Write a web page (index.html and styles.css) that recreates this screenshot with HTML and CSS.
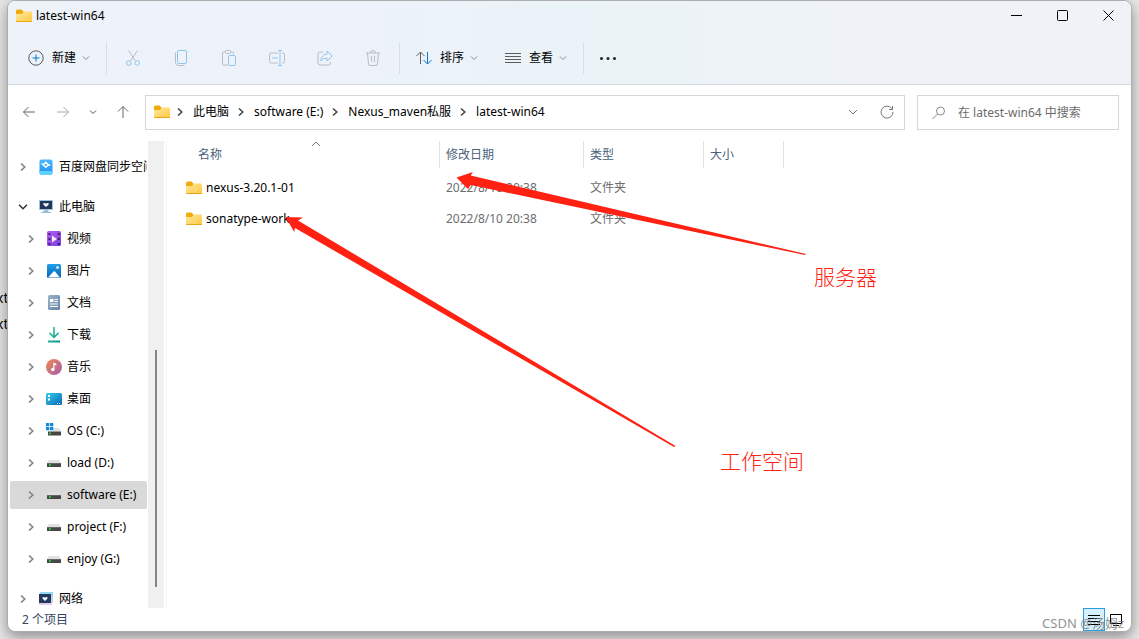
FILE: index.html
```html
<!DOCTYPE html>
<html lang="zh-CN">
<head>
<meta charset="utf-8">
<title>latest-win64</title>
<link rel="stylesheet" href="styles.css">
</head>
<body>
<svg class="defs" aria-hidden="true">
  <defs>
    <linearGradient id="gFolder" x1="0" y1="0" x2="1" y2="1"><stop offset="0" stop-color="#ffe8a0"/><stop offset="1" stop-color="#ffc93f"/></linearGradient>
    <linearGradient id="gBaidu" x1="0" y1="0" x2="0" y2="1"><stop offset="0" stop-color="#4cb8ff"/><stop offset="1" stop-color="#1e90f5"/></linearGradient>
    <linearGradient id="gVideo" x1="0" y1="0" x2="1" y2="1"><stop offset="0" stop-color="#b35cf0"/><stop offset="1" stop-color="#7c3fe0"/></linearGradient>
    <linearGradient id="gPic" x1="0" y1="0" x2="0" y2="1"><stop offset="0" stop-color="#1fa0ea"/><stop offset="1" stop-color="#0b63b8"/></linearGradient>
    <linearGradient id="gDoc" x1="0" y1="0" x2="1" y2="1"><stop offset="0" stop-color="#9db4ca"/><stop offset="1" stop-color="#6283a8"/></linearGradient>
    <linearGradient id="gDown" x1="0" y1="0" x2="1" y2="1"><stop offset="0" stop-color="#2ecb93"/><stop offset="1" stop-color="#0a948c"/></linearGradient>
    <linearGradient id="gMusic" x1="0" y1="0" x2="1" y2="1"><stop offset="0" stop-color="#f08a4b"/><stop offset="1" stop-color="#a85bb0"/></linearGradient>
    <linearGradient id="gDesk" x1="0" y1="0" x2="1" y2="1"><stop offset="0" stop-color="#35cde8"/><stop offset="1" stop-color="#0a68b8"/></linearGradient>
    <linearGradient id="gNet" x1="0" y1="0" x2="0" y2="1"><stop offset="0" stop-color="#86d9ee"/><stop offset="1" stop-color="#e9cdf2"/></linearGradient>
    <symbol id="folder" viewBox="0 0 16 14"><path d="M0 2a1.500 1.500 0 0 1 1.500-1.500h4L7.500 2.500V6H0z" fill="#f0ab0c"/><path d="M0 5h6l2-2.500h7a1 1 0 0 1 1 1V12a1 1 0 0 1-1 1H1a1 1 0 0 1-1-1z" fill="url(#gFolder)"/><path d="M0 12h16a1 1 0 0 1-1 1H1a1 1 0 0 1-1-1z" fill="#eaa514"/></symbol>
    <symbol id="right" viewBox="0 0 6 8"><path d="M1 .5 4.800 4 1 7.500" fill="none" stroke="currentColor" stroke-width="1.500"/></symbol>
    <symbol id="down" viewBox="0 0 8 6"><path d="M1 1.500 4 4.500 7 1.500" fill="none" stroke="currentColor"/></symbol>
    <symbol id="drive" viewBox="0 0 16 16"><path d="M3 5h10l2 3H1z" fill="#dfe1e3"/><path d="M1 8h14v4H1z" fill="#454747"/><path d="M1 8h14v1H1z" fill="#666"/><circle cx="4" cy="10" r="1" fill="#35e04b"/></symbol>
  </defs>
</svg>
<div class="backdrop" aria-hidden="true"><span>xt</span><span>xt</span></div>
<div class="window">
  <header class="chrome">
    <div class="titlebar">
      <svg class="folder"><use href="#folder"/></svg>
      <h1 class="title">latest-win64</h1>
      <button class="caption" aria-label="最小化"><svg viewBox="0 0 11 11"><path d="M0 5.500H11"/></svg></button>
      <button class="caption" aria-label="最大化"><svg viewBox="0 0 11 11"><rect x=".5" y=".5" width="10" height="10" rx="1"/></svg></button>
      <button class="caption" aria-label="关闭"><svg viewBox="0 0 11 11"><path d="M.5.500l10 10M10.500.500l-10 10"/></svg></button>
    </div>
    <div class="toolbar">
      <button class="command"><svg class="icon" viewBox="0 0 16 16"><circle cx="8" cy="8" r="7.200" class="ink"/><path d="M8 4.500v7M4.500 8h7" class="blue"/></svg>新建<svg class="down"><use href="#down"/></svg></button>
      <span class="rule"></span>
      <div class="tools">
        <button aria-label="剪切" disabled><svg class="icon" viewBox="0 0 16 16"><path d="M3.500.500 10.500 11M12.500.500 5.500 11" class="ink"/><circle cx="3.800" cy="13" r="2.300" class="blue"/><circle cx="12.200" cy="13" r="2.300" class="blue"/></svg></button>
        <button aria-label="复制" disabled><svg class="icon" viewBox="0 0 16 16"><path d="M2.500 2.500v10a3 3 0 0 0 3 3h6" class="ink"/><rect x="4.500" y=".5" width="9" height="13" rx="1.500" class="blue"/></svg></button>
        <button aria-label="粘贴" disabled><svg class="icon" viewBox="0 0 16 16"><path d="M4.500 2h-2a1 1 0 0 0-1 1v11a1 1 0 0 0 1 1H7M9.500 2h2a1 1 0 0 1 1 1v1.500" class="ink"/><rect x="4.500" y=".5" width="5" height="3" rx="1" class="ink"/><rect x="7.500" y="5.500" width="7" height="10" rx="1" class="blue"/></svg></button>
        <button aria-label="重命名" disabled><svg class="icon" viewBox="0 0 16 16"><path d="M9 3H2a1.500 1.500 0 0 0-1.500 1.500v7A1.500 1.500 0 0 0 2 13h7M13 3h1a1.500 1.500 0 0 1 1.500 1.500v7A1.500 1.500 0 0 1 14 13h-1" class="ink"/><path d="M9 .5h4M9 15.500h4M11 .5v15M3 8h6" class="blue"/></svg></button>
        <button aria-label="共享" disabled><svg class="icon" viewBox="0 0 16 16"><path d="M6 2H3a2 2 0 0 0-2 2v9a2 2 0 0 0 2 2h8.500a2 2 0 0 0 2-2v-1" class="ink"/><path d="M10 1l5.300 5-5.300 5V8.300C7 8 5 9 3.700 11 4 7 6.500 4.200 10 4z" class="blue"/></svg></button>
        <button aria-label="删除" disabled><svg class="icon" viewBox="0 0 16 16"><path d="M1 3h14M5.500 3a2.500 2.500 0 0 1 5 0M2.500 3l1 11a1.500 1.500 0 0 0 1.500 1.500h6a1.500 1.500 0 0 0 1.500-1.500l1-11M6.500 6v6M9.500 6v6" class="ink"/></svg></button>
      </div>
      <span class="rule"></span>
      <button class="command"><svg class="icon" viewBox="0 0 16 16"><path d="M4.500 14V2.500M.5 6l4-4 4 4" class="ink"/><path d="M11.500 2v11.500M7.500 10l4 4 4-4" class="blue"/></svg>排序<svg class="down"><use href="#down"/></svg></button>
      <button class="command"><svg class="icon" viewBox="0 0 16 16"><path d="M0 3.500h16M0 6.500h16M0 9.500h16M0 12.500h16" class="ink"/></svg>查看<svg class="down"><use href="#down"/></svg></button>
      <span class="rule"></span>
      <button class="command" aria-label="更多"><svg class="icon" viewBox="0 0 16 16"><g fill="#222"><circle cx="1.500" cy="8.500" r="1.500"/><circle cx="8" cy="8.500" r="1.500"/><circle cx="14.500" cy="8.500" r="1.500"/></g></svg></button>
    </div>
  </header>
  <div class="location">
    <div class="history">
      <button aria-label="后退"><svg class="icon" viewBox="0 0 16 16"><path d="M14 8H2.500M7.500 3l-5 5 5 5"/></svg></button>
      <button aria-label="前进" class="faint"><svg class="icon" viewBox="0 0 16 16"><path d="M2 8h11.500M8.500 3l5 5-5 5"/></svg></button>
      <button aria-label="最近" class="recent"><svg class="down"><use href="#down"/></svg></button>
      <button aria-label="向上"><svg class="icon" viewBox="0 0 16 16"><path d="M8 14V2.500M3 7.500l5-5 5 5"/></svg></button>
    </div>
    <nav class="address" aria-label="地址">
      <svg class="folder"><use href="#folder"/></svg>
      <ol class="crumbs">
        <li><svg class="right"><use href="#right"/></svg><a href="#">此电脑</a></li>
        <li><svg class="right"><use href="#right"/></svg><a href="#">software (E:)</a></li>
        <li><svg class="right"><use href="#right"/></svg><a href="#">Nexus_maven私服</a></li>
        <li><svg class="right"><use href="#right"/></svg><a href="#">latest-win64</a></li>
      </ol>
      <button aria-label="展开"><svg class="icon" viewBox="0 0 16 16"><path d="M4 6l4 4 4-4"/></svg></button>
      <button aria-label="刷新"><svg class="icon" viewBox="0 0 16 16"><path d="M12.800 4.500A6 6 0 1 0 14 8M13.500 2v3.500H10"/></svg></button>
    </nav>
    <label class="search"><svg class="icon" viewBox="0 0 16 16"><circle cx="9.500" cy="6" r="4"/><path d="M6.500 9l-5 5"/></svg><input type="text" aria-label="搜索" placeholder="在 latest-win64 中搜索"></label>
  </div>
  <div class="body">
    <nav class="tree" aria-label="导航窗格">
      <a href="#" class="node root"><svg class="right"><use href="#right"/></svg><svg class="icon" viewBox="0 0 16 16"><rect x="1.500" y=".5" width="13" height="15" rx="2" fill="url(#gBaidu)"/><path d="M1.500 12h13v2a2 2 0 0 1-2 2h-9a2 2 0 0 1-2-2z" fill="#5fd0ff"/><path d="M7.800 3.200 10.300 5.700 7.800 8.200 5.300 5.700z" stroke="#fff" stroke-width="1.500"/><path d="M3.500 4.500 5.300 5.700M10.300 5.700 12 6.500" stroke="#fff" stroke-width="1.500"/></svg>百度网盘同步空间</a>
      <a href="#" class="node root"><svg class="open" viewBox="0 0 10 6"><path d="M1 .7 5 4.700 9 .7"/></svg><svg class="icon" viewBox="0 0 16 16"><path d="M1 1h14v10H1z" fill="#9cc4e4"/><path d="M2 2h12v8H2z" fill="#243656"/><path d="M8 8 5.200 5.500C5 3.800 7 3.600 8 4.800c1-1.200 3-1 2.800.7z" fill="#eaf7ff"/><path d="M6 11h4l1 2H5z" fill="#a9bccb"/><path d="M3 13h10v1H3z" fill="#91c3df"/></svg>此电脑</a>
      <a href="#" class="node"><svg class="right"><use href="#right"/></svg><svg class="icon" viewBox="0 0 16 16"><rect x="1" y="0" width="14" height="15" rx="1.500" fill="url(#gVideo)"/><path d="M6 4.500v7L11 8z" fill="#f5eaff"/><path d="M3.500 2v12M12.800 2v12" stroke="#38206b" stroke-width="2" stroke-dasharray="2 3"/></svg>视频</a>
      <a href="#" class="node"><svg class="right"><use href="#right"/></svg><svg class="icon" viewBox="0 0 16 16"><rect x="1" y="1" width="14" height="14" rx="1.500" fill="url(#gPic)"/><path d="M2 14.500 7.500 8.500q.8-.6 1.500 0l5 6z" fill="#fff"/><circle cx="11.500" cy="4.500" r="1.300" fill="#fff"/></svg>图片</a>
      <a href="#" class="node"><svg class="right"><use href="#right"/></svg><svg class="icon" viewBox="0 0 16 16"><rect x="2" y="0" width="12" height="15" rx="1.500" fill="url(#gDoc)"/><path d="M4 4h3.500v3H4zM8.500 4H12v1H8.500zM8.500 6H12v1H8.500zM4 8.500h8v1H4zM4 11h8v1H4z" fill="#fff"/></svg>文档</a>
      <a href="#" class="node"><svg class="right"><use href="#right"/></svg><svg class="icon" viewBox="0 0 16 16"><path d="M7.200 0h1.600v8.500l3.300-3.300 1.100 1.100L8 11.500 2.800 6.300l1.100-1.100 3.300 3.300zM2 13.500h12v2H2z" fill="url(#gDown)"/></svg>下载</a>
      <a href="#" class="node"><svg class="right"><use href="#right"/></svg><svg class="icon" viewBox="0 0 16 16"><circle cx="8" cy="8" r="8" fill="url(#gMusic)"/><circle cx="6.800" cy="10.500" r="1.700" fill="#fff"/><path d="M7.300 10.500V3.500l3 1.200v1.800l-1.800-.7v4.700z" fill="#fff"/></svg>音乐</a>
      <a href="#" class="node"><svg class="right"><use href="#right"/></svg><svg class="icon" viewBox="0 0 16 16"><rect y="2" width="16" height="12" rx="1.500" fill="url(#gDesk)"/><path d="M2 4h2v2H2zM2 7.500h2v2H2z" fill="#fff"/><path d="M11 12.500h1M13 12.500h1" stroke="#fff"/></svg>桌面</a>
      <a href="#" class="node"><svg class="right"><use href="#right"/></svg><svg class="icon" viewBox="0 0 16 16"><path d="M7 5h6l2 3.500H7z" fill="#dfe1e3"/><path d="M2 8.500h13v4H2z" fill="#454747"/><circle cx="4" cy="10.500" r="1" fill="#35e04b"/><path d="M0 0h3.300v3.300H0zM4 0h3.300v3.300H4zM0 4h3.300v3.300H0zM4 4h3.300v3.300H4z" fill="#1688dd"/></svg>OS (C:)</a>
      <a href="#" class="node"><svg class="right"><use href="#right"/></svg><svg class="icon"><use href="#drive"/></svg>load (D:)</a>
      <a href="#" class="node selected"><svg class="right"><use href="#right"/></svg><svg class="icon"><use href="#drive"/></svg>software (E:)</a>
      <a href="#" class="node"><svg class="right"><use href="#right"/></svg><svg class="icon"><use href="#drive"/></svg>project (F:)</a>
      <a href="#" class="node"><svg class="right"><use href="#right"/></svg><svg class="icon"><use href="#drive"/></svg>enjoy (G:)</a>
      <a href="#" class="node root"><svg class="right"><use href="#right"/></svg><svg class="icon" viewBox="0 0 16 16"><path d="M2 1h13v11H2zM1 4h13v10H1z" fill="url(#gNet)"/><path d="M1 3h12v9H1z" fill="#27395b"/><path d="M7 10 4.500 7.500C4.300 6 6 5.600 7 6.800c1-1.200 2.700-.8 2.500.7z" fill="#eaf7ff"/></svg>网络</a>
    </nav>
    <div class="scrollbar"><div class="thumb"></div></div>
    <main class="files">
      <table>
        <thead><tr><th class="name">名称<svg class="sorted" viewBox="0 0 10 6"><path d="M1 5l4-4 4 4"/></svg></th><th class="date">修改日期</th><th class="kind">类型</th><th class="size">大小</th></tr></thead>
        <tbody>
          <tr><td class="name"><span class="entry"><svg class="folder"><use href="#folder"/></svg>nexus-3.20.1-01</span></td><td>2022/8/10 20:38</td><td>文件夹</td><td></td></tr>
          <tr><td class="name"><span class="entry"><svg class="folder"><use href="#folder"/></svg>sonatype-work</span></td><td>2022/8/10 20:38</td><td>文件夹</td><td></td></tr>
        </tbody>
      </table>
    </main>
  </div>
  <footer class="status">
    <span class="count">2 个项目</span>
    <button class="view active" aria-label="详细信息"><svg viewBox="0 0 12 12"><path d="M0 1.500h12M0 4.500h12M0 7.500h12M0 10.500h12"/></svg></button>
    <button class="view" aria-label="大图标"><svg viewBox="0 0 12 12"><path d="M.5.500h11v9H.5zM3 11.500h6"/></svg></button>
    <span class="watermark">CSDN @汤姆z</span>
  </footer>
  <svg class="arrows" viewBox="0 0 900 460" aria-hidden="true"><path d="M456.500 177.500 473 172 470.700 175.500 806 254 805 255 470.700 185 468 189z"/><path d="M285.500 217 303 217.500 298 220.500 675.500 446 674 447 295 228 294.300 232z"/></svg>
  <span class="note server">服务器</span>
  <span class="note workspace">工作空间</span>
</div>
</body>
</html>
```
FILE: styles.css
```css
* { box-sizing: border-box; }
body {
  margin: 0;
  height: 100vh;
  padding: 0 7px 7px;
  overflow: hidden;
  background: #e6e6e6;
  font: 12px/16px "Noto Sans", "Noto Sans CJK SC", sans-serif;
  color: #000;
}
button { border: 0; padding: 0; background: none; font: inherit; color: inherit; display: flex; align-items: center; justify-content: center; }
a { color: inherit; text-decoration: none; }
svg { flex: none; display: block; }
.defs { position: absolute; width: 0; height: 0; }
.icon { width: 16px; height: 16px; fill: none; }
.folder { width: 16px; height: 14px; }
.right { width: 6px; height: 8px; }
.down { width: 8px; height: 6px; color: #888; }

.backdrop { position: absolute; left: -4px; top: 290px; display: flex; flex-direction: column; gap: 10px; font-size: 14px; }
.window {
  position: relative;
  height: 100%;
  display: flex;
  flex-direction: column;
  background: #fff;
  border: 1px solid #adadad;
  border-radius: 8px;
  box-shadow: 0 5px 14px rgba(0, 0, 0, 0.38);
  overflow: hidden;
}

.chrome { background: linear-gradient(90deg, #eef3fa 0, #edf2fb 30%, #eaf3f7 50%, #eff3f8 75%, #eff3f7 100%); border-bottom: 1px solid #d5dde3; }
.titlebar { display: flex; height: 29px; padding-left: 8px; align-items: center; }
.title { flex: 1; margin: 0 0 0 4px; font-size: 12px; font-weight: 400; }
.caption { width: 46px; height: 28px; }
.caption svg { width: 11px; height: 11px; fill: none; stroke: #000; }

.toolbar { display: flex; align-items: center; height: 54px; padding: 2px 0 0 20px; }
.command { gap: 8px; }
.command .down { margin-left: -2px; }
.command + .command { margin-left: 27px; }
.rule { width: 1px; height: 32px; margin: 0 16px; background: #d9dfe5; }
.tools { display: flex; margin: 0 -14px; }
.tools button { width: 48px; height: 32px; }
.toolbar .ink { stroke: #5c5c5c; fill: none; }
.toolbar .blue { stroke: #0078d0; fill: none; }
.tools .ink { stroke: #b9bdc1; }
.tools .blue { stroke: #90c5ea; }

.location { display: flex; padding: 10px 12px 11px 0; gap: 12px; }
.history { display: flex; align-items: center; padding: 0 0 2px 13px; width: 125px; gap: 18px; }
.history svg { stroke: #666; }
.history .down { stroke: none; color: #555; }
.history .faint svg { stroke: #aaa; }
.history .recent { width: 8px; }
.address, .search { display: flex; align-items: center; height: 35px; border: 1px solid #d6d6d6; background: #fff; }
.address { flex: 1; padding: 0 9px 1px 8px; gap: 7px; }
.crumbs { flex: 1; display: flex; margin: 0; padding: 0; gap: 9px; list-style: none; }
.crumbs li { display: flex; align-items: center; gap: 10px; }
.crumbs .right { color: #444; }
.address button + button { margin-left: 11px; }
.address .icon { stroke: #777; }
.search { width: 202px; padding: 0 13px; gap: 11px; }
.search .icon { stroke: #888; }
.search input { flex: 1; min-width: 0; border: 0; padding: 0; outline: 0; background: none; font: inherit; }
.search input::placeholder { color: #6b6b6b; opacity: 1; }

.body { flex: 1; min-height: 0; display: flex; }
.tree { width: 140px; padding: 12px 1px 0 2px; overflow: hidden; }
.node { display: flex; align-items: center; height: 28px; margin-bottom: 4px; padding-left: 18px; border-radius: 2px; white-space: nowrap; overflow: hidden; }
.node .right { color: #808080; margin-right: 12px; }
.node .icon { margin-right: 5px; }
.node.root { padding-left: 10px; margin-bottom: 12px; }
.node.root + .node.root { margin-bottom: 4px; }
.node.root:last-child { margin-top: 12px; }
.open { width: 10px; height: 6px; margin: 0 10px 0 -2px; fill: none; stroke: #333; stroke-width: 1.5; }
.selected { background: #d9d9d9; }
.scrollbar { width: 16px; padding: 209px 7px 21px; background: #f0f0f0; display: flex; }
.thumb { width: 2px; background: #858585; }

.files { flex: 1; margin-left: 2px; padding-left: 19px; border-left: 1px solid #f5f5f5; }
table { table-layout: fixed; width: 598px; border-collapse: separate; border-spacing: 0; }
th, td { padding: 0 0 0 6px; text-align: left; font-weight: 400; }
th { position: relative; height: 27px; border-right: 1px solid #e2e2e2; color: #4c607a; }
th.name { width: 254px; padding-left: 12px; }
th.date { width: 144px; }
th.kind { width: 120px; }
td { height: 31px; color: #6d6d6d; }
td.name { padding: 0; color: #000; }
tbody::before { content: ""; display: block; height: 4px; }
.entry { display: flex; align-items: center; gap: 4px; }
.sorted { position: absolute; left: 125px; top: 0; width: 10px; height: 6px; fill: none; stroke: #777; }

.status { display: flex; align-items: center; height: 23px; padding: 0 4px 0 14px; color: #33475f; }
.count { flex: 1; }
.view { width: 22px; height: 23px; border: 1px solid transparent; }
.view.active { border-color: #2a9fdc; background: #d5effc; }
.view svg { width: 12px; height: 12px; fill: none; stroke: #000; }
.watermark { position: absolute; right: 7px; bottom: 0; color: #777; opacity: 0.8; font-size: 13px; }
.arrows { position: absolute; left: -8px; top: -1px; width: 900px; height: 460px; fill: #ff2212; pointer-events: none; }
.note { position: absolute; font-size: 21px; line-height: 28px; font-weight: 300; color: #ff2212; }
.server { left: 806px; top: 262px; }
.workspace { left: 712px; top: 446px; }
```
